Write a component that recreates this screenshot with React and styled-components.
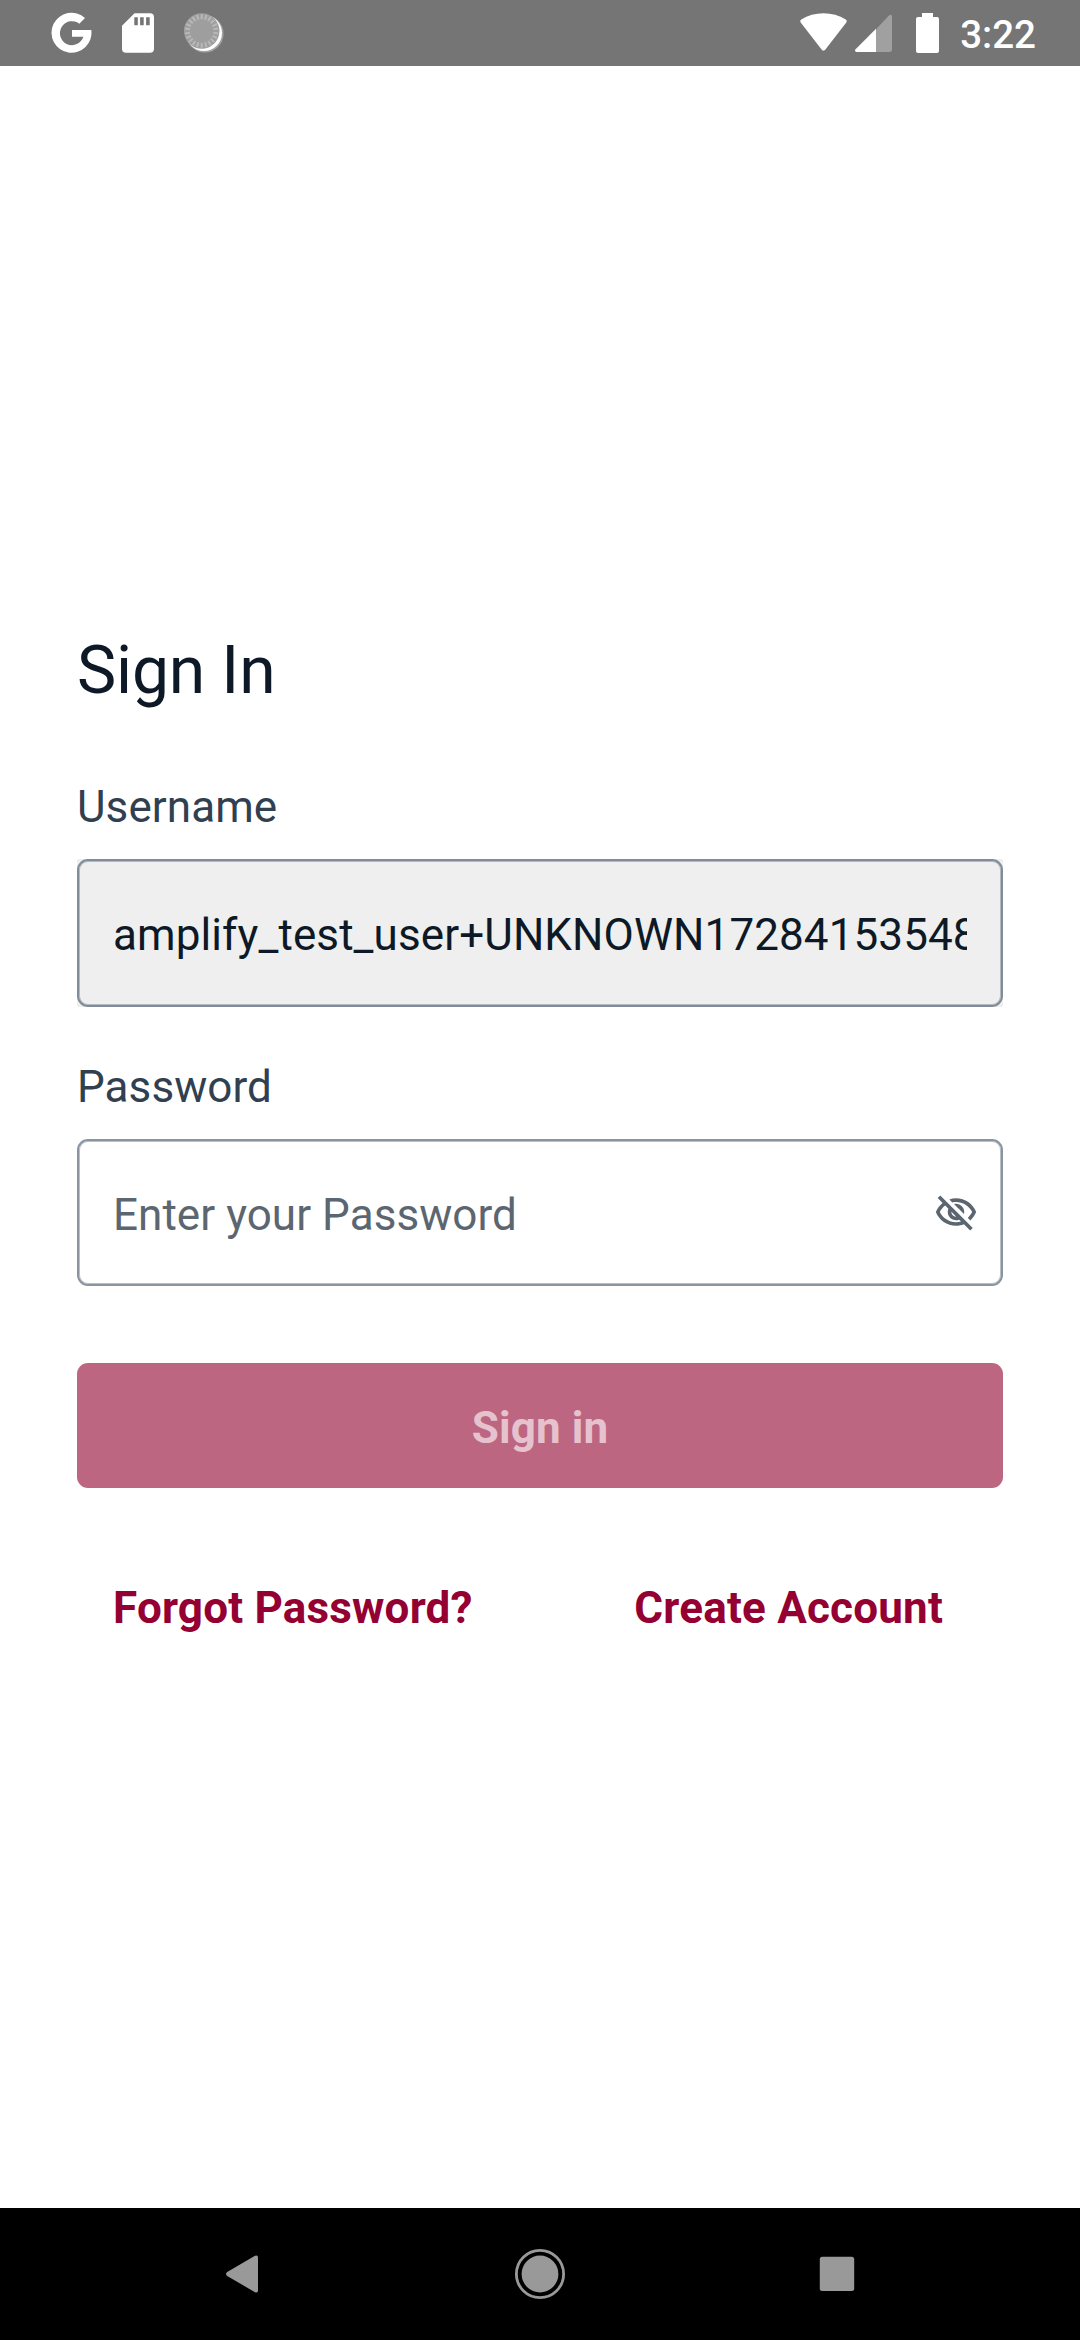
import React from "react";
import styled, { createGlobalStyle } from "styled-components";

const GlobalStyle = createGlobalStyle`
  * { box-sizing: border-box; }
  body { margin: 0; background: #fff; font-family: Roboto, "Liberation Sans", sans-serif; }
`;

const Screen = styled.div`
  width: 1080px;
  height: 2340px;
  display: flex;
  flex-direction: column;
  overflow: hidden;
  background: #fff;
`;

const StatusBar = styled.header`
  height: 66px;
  flex: none;
  display: flex;
  align-items: flex-start;
  justify-content: space-between;
  padding: 13px 44px 0 52px;
  background: #757575;
`;

const Notifications = styled.div`
  display: flex;
  gap: 30px;
`;

const Indicators = styled.div`
  display: flex;
`;

const Glyph = styled.svg`
  display: block;
  flex: none;
  overflow: visible;
  margin-right: ${(p) => p.$after || 0}px;
`;

const Clock = styled.time`
  font-size: 38.5px;
  font-weight: 500;
  line-height: 44px;
  color: #fff;
`;

const Form = styled.main`
  flex: 1;
  display: flex;
  flex-direction: column;
  padding: 566px 77px 0;
`;

const Title = styled.h1`
  margin: 0 0 71px;
  font-size: 66px;
  font-weight: 400;
  line-height: 78px;
  letter-spacing: -0.15px;
  color: #0d1926;
`;

const Label = styled.label`
  display: block;
  font-size: 44px;
  line-height: 52px;
  letter-spacing: 0.08px;
  color: #304050;
  margin-bottom: ${(p) => p.$gap}px;
`;

const Field = styled.div`
  height: ${(p) => p.$height}px;
  margin-bottom: ${(p) => p.$after}px;
  background: ${(p) => (p.$filled ? "#efefef" : "#fff")};
`;

const Frame = styled.div`
  height: 100%;
  display: flex;
  align-items: center;
  padding: 0 ${(p) => p.$right}px 0 34px;
  border: 2px solid ${(p) => (p.$filled ? "#808c97" : "#89949f")};
  border-radius: 11px;
  box-shadow: inset 0 0 0 1px #8995a099;
`;

const Input = styled.input`
  flex: 1;
  min-width: 0;
  height: 60px;
  margin: 0;
  padding: 4px 0 0;
  border: 0;
  outline: 0;
  background: transparent;
  font: 400 44px/56px Roboto, "Liberation Sans", sans-serif;
  letter-spacing: 0.1px;
  color: #0d1926;
  &::placeholder { color: #5c6670; opacity: 1; letter-spacing: 0.05px; }
`;

const IconButton = styled.button`
  display: flex;
  padding: 0;
  border: 0;
  background: none;
  color: #5c6670;
`;

const SubmitButton = styled.button`
  height: 125px;
  flex: none;
  margin: 0 0 57px;
  padding: 5px 0 0;
  border: 0;
  border-radius: 11px;
  background: #bd6682;
  color: #e5c2cd;
  font: 700 44px/52px Roboto, "Liberation Sans", sans-serif;
  letter-spacing: 0.1px;
`;

const Links = styled.nav`
  height: 125px;
  display: flex;
  align-items: center;
  justify-content: space-between;
  padding: 0 60px 0 36px;
`;

const LinkButton = styled.button`
  padding: 0;
  border: 0;
  background: none;
  color: #950033;
  white-space: nowrap;
  font: 700 44px/52px Roboto, "Liberation Sans", sans-serif;
  letter-spacing: 0.2px;
`;

const NavBar = styled.footer`
  height: 132px;
  flex: none;
  display: grid;
  grid-template-columns: repeat(3, 297px);
  justify-content: center;
  align-items: center;
  justify-items: center;
  background: #000;
`;

const ticks = Array.from({ length: 22 }, (_, i) => (i * 360) / 22);

const GoogleIcon = () => (
  <Glyph width="40" height="40" viewBox="0 0 40 40" fill="#fff">
    <path d="M33 5A20 20 0 1 0 39.3 17H20V23.7H31.4A12 12 0 1 1 27.3 10.7Z" />
  </Glyph>
);

const SdCardIcon = () => (
  <Glyph width="32" height="40" viewBox="0 0 32 40" fill="#fff">
    <path
      fillRule="evenodd"
      d="M12.5 .3H28Q32 .3 32 4.3V35.7Q32 39.7 28 39.7H4Q0 39.7 0 35.7V12.7ZM12.3 4.3V12.3H15.8V4.3ZM18.1 4.3V12.3H21.7V4.3ZM24.1 4.3V12.3H27.7V4.3Z"
    />
  </Glyph>
);

const SyncDiscIcon = () => (
  <Glyph width="40" height="40" viewBox="0 0 40 40">
    <circle cx="20.8" cy="20.8" r="18.8" fill="#a2a2a2" />
    <circle cx="20" cy="20" r="18" fill="#fff" />
    <circle cx="17.7" cy="18" r="17.8" fill="#9e9e9e" />
    {ticks.map((a) => (
      <path key={a} d="M17.7 1.2V6.2" stroke="#b8b8b8" strokeWidth="2" transform={`rotate(${a} 17.7 18)`} />
    ))}
  </Glyph>
);

const WifiIcon = () => (
  <Glyph $after={8} width="47" height="40" viewBox="0 0 47 40" fill="#fff">
    <path d="M.7 9.6Q-.6 7.7 1.2 6.5C14.5-2 32.5-2 45.8 6.5Q47.6 7.7 46.3 9.6L25.6 36.3Q23.5 39 21.4 36.3Z" />
  </Glyph>
);

const SignalIcon = () => (
  <Glyph $after={24} width="37" height="40" viewBox="0 0 37 40">
    <path d="M21 16.2 34 2.4Q37 .7 37 3.7V36.7Q37 39 34.7 39H21Z" fill="#a0a0a0" />
    <path d="M21 15.8V39H1.6Q-.9 38.5 .6 36.2Z" fill="#fff" />
  </Glyph>
);

const BatteryIcon = () => (
  <Glyph $after={21} width="23" height="40" viewBox="0 0 23 40" fill="#fff">
    <path d="M6 0H17V4H21Q23 4 23 6V38Q23 40 21 40H2Q0 40 0 38V6Q0 4 2 4H6Z" />
  </Glyph>
);

const EyeOffIcon = () => (
  <Glyph width="44" height="44" viewBox="0 0 24 24" fill="currentColor">
    <path d="M12 6c3.79 0 7.17 2.13 8.82 5.5-.59 1.22-1.42 2.27-2.41 3.12l1.41 1.41c1.39-1.23 2.49-2.77 3.18-4.53C21.27 7.11 17 4 12 4c-1.27 0-2.49.2-3.64.57l1.65 1.65C10.66 6.09 11.32 6 12 6zm-1.07 1.14L13 9.21c.57.25 1.03.71 1.28 1.28l2.07 2.07c.08-.34.14-.7.14-1.07C16.5 9.01 14.48 7 12 7c-.37 0-.72.05-1.07.14zM2.01 3.87l2.68 2.68C3.06 7.83 1.77 9.53 1 11.5 2.73 15.89 7 19 12 19c1.52 0 2.98-.29 4.32-.82l3.42 3.42 1.41-1.41L3.42 2.45 2.01 3.87zm7.5 7.5l2.61 2.61c-.04.01-.08.02-.12.02-1.38 0-2.5-1.12-2.5-2.5 0-.05.01-.08.01-.13zm-3.4-3.4l1.75 1.75c-.23.55-.36 1.15-.36 1.78 0 2.48 2.02 4.5 4.5 4.5.63 0 1.23-.13 1.77-.36l.98.98c-.88.24-1.8.38-2.75.38-3.79 0-7.17-2.13-8.82-5.5.7-1.43 1.72-2.61 2.93-3.53z" />
  </Glyph>
);

export default function App() {
  return (
    <>
      <GlobalStyle />
      <Screen>
        <StatusBar>
          <Notifications>
            <GoogleIcon />
            <SdCardIcon />
            <SyncDiscIcon />
          </Notifications>
          <Indicators>
            <WifiIcon />
            <SignalIcon />
            <BatteryIcon />
            <Clock>3:22</Clock>
          </Indicators>
        </StatusBar>
        <Form>
          <Title>Sign In</Title>
          <Label htmlFor="username" $gap={26}>Username</Label>
          <Field $height={148} $after={54} $filled>
            <Frame $filled $right={34}>
              <Input id="username" readOnly value="amplify_test_user+UNKNOWN17284153548" />
            </Frame>
          </Field>
          <Label htmlFor="password" $gap={26}>Password</Label>
          <Field $height={147} $after={77}>
            <Frame $right={23}>
              <Input id="password" type="password" placeholder="Enter your Password" />
              <IconButton type="button" aria-label="Show password">
                <EyeOffIcon />
              </IconButton>
            </Frame>
          </Field>
          <SubmitButton type="button">Sign in</SubmitButton>
          <Links>
            <LinkButton type="button">Forgot Password?</LinkButton>
            <LinkButton type="button">Create Account</LinkButton>
          </Links>
        </Form>
        <NavBar>
          <Glyph width="50" height="50" viewBox="0 0 50 50" fill="#999">
            <path d="M9.2 27Q6.8 25 9.2 23L37 6.8Q40 5.6 40 8.6V41.4Q40 44.4 37 43.2Z" />
          </Glyph>
          <Glyph width="50" height="50" viewBox="0 0 50 50" fill="#999">
            <circle cx="25" cy="25" r="23.6" fill="none" stroke="#999" strokeWidth="2.8" />
            <circle cx="25" cy="25" r="18.4" />
          </Glyph>
          <Glyph width="50" height="50" viewBox="0 0 50 50" fill="#999">
            <rect x="7.8" y="7.7" width="34.4" height="34.4" rx="2.5" />
          </Glyph>
        </NavBar>
      </Screen>
    </>
  );
}
